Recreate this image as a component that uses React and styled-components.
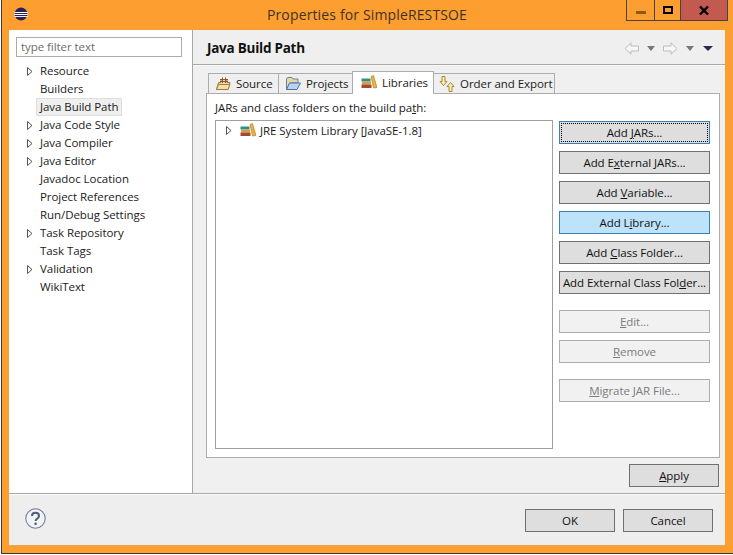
import styled, { createGlobalStyle } from 'styled-components';

const Global = createGlobalStyle`
  html, body { margin: 0; padding: 0; background: #fff; }
  * { box-sizing: border-box; }
`;

const treeItems = [
  { label: 'Resource', arrow: true },
  { label: 'Builders' },
  { label: 'Java Build Path', selected: true },
  { label: 'Java Code Style', arrow: true },
  { label: 'Java Compiler', arrow: true },
  { label: 'Java Editor', arrow: true },
  { label: 'Javadoc Location' },
  { label: 'Project References' },
  { label: 'Run/Debug Settings' },
  { label: 'Task Repository', arrow: true },
  { label: 'Task Tags' },
  { label: 'Validation', arrow: true },
  { label: 'WikiText' },
];

const Arrow = () => (
  <ArrowSvg width="6" height="9" viewBox="0 0 6 9">
    <path d="M0.5 0.5 L5 4.5 L0.5 8.5 Z" fill="#fff" stroke="#555" />
  </ArrowSvg>
);

const EclipseLogo = () => (
  <svg width="14" height="14" viewBox="0 0 14 14">
    <circle cx="7" cy="7" r="6.5" fill="#2c2255" />
    <rect x="0" y="5" width="14" height="1" fill="#fff" />
    <rect x="0" y="7" width="14" height="1" fill="#fff" />
    <rect x="0" y="9" width="14" height="1" fill="#e8e8f0" />
  </svg>
);

const SourceIcon = () => (
  <svg width="16" height="14" viewBox="0 0 16 14">
    <path d="M1.5 12.5 L3.5 5.5 L6 5.5 L6 2.5 L12 2.5 L12 5.5 L15 5.5 L13 12.5 Z" fill="#f0d8a0" stroke="#a07c3c" />
    <path d="M7.5 0.5 V6 M10.5 0.5 V6 M5 2.5 H13 M5 4.5 H13" stroke="#8a5a30" fill="none" />
    <path d="M1.5 12.5 L3.5 7.5 L15 7.5 L13 12.5 Z" fill="#f5dfa8" stroke="#a07c3c" />
  </svg>
);

const FolderIcon = () => (
  <svg width="16" height="14" viewBox="0 0 16 14">
    <path d="M1.5 12.5 V1.5 L3 0.5 H7 L8 2 H13 V6 H5 Z" fill="#e6d9a8" stroke="#6d7fa0" />
    <path d="M1.5 12.5 L4.5 6 H15.5 L12 12.5 Z" fill="#b9d2f0" stroke="#4f71a5" />
  </svg>
);

const LibraryIcon = () => (
  <svg width="16" height="14" viewBox="0 0 16 14">
    <rect x="0.5" y="3.5" width="9" height="3" fill="#2f8f88" />
    <rect x="1" y="6.5" width="9" height="3" fill="#d0a050" />
    <rect x="0.5" y="9.5" width="10" height="3.5" fill="#a8482f" />
    <path d="M10 1.5 L12.5 0.5 L16 12.5 L12.5 13 Z" fill="#ecb335" stroke="#a07820" strokeWidth="0.6" />
  </svg>
);

const OrderIcon = () => (
  <svg width="16" height="16" viewBox="0 0 16 16">
    <path d="M3 0.5 H6 V5.5 H8 L4.5 9.5 L1 5.5 H3 Z" fill="#fbeeb8" stroke="#a98a30" />
    <path d="M10 15.5 H13 V10.5 H15 L11.5 6.5 L8 10.5 H10 Z" fill="#fbeeb8" stroke="#a98a30" />
  </svg>
);

const NavArrow = ({ flip }) => (
  <svg width="15" height="13" viewBox="0 0 15 13">
    <path
      d={flip ? 'M0.5 4 H8 V0.8 L14 6.5 L8 12.2 V9 H0.5 Z' : 'M14.5 4 H7 V0.8 L1 6.5 L7 12.2 V9 H14.5 Z'}
      fill="#f6f6f6"
      stroke="#bcbcbc"
    />
  </svg>
);

const HelpIcon = () => (
  <HelpSvg width="21" height="21" viewBox="0 0 21 21">
    <circle cx="10.5" cy="10.5" r="9.7" fill="#f2f3f5" stroke="#6f8299" strokeWidth="1.1" />
    <path d="M7 8 C7 3.8 14 3.8 14 8 C14 10.5 10.6 10.4 10.6 13" fill="none" stroke="#4a5f78" strokeWidth="2" />
    <circle cx="10.6" cy="15.8" r="1.3" fill="#4a5f78" />
  </HelpSvg>
);

const Btn = ({ label, u, ...rest }) => {
  const i = u == null ? -1 : u;
  return (
    <Button {...rest}>
      {i < 0 ? label : (
        <>
          {label.slice(0, i)}
          <U>{label[i]}</U>
          {label.slice(i + 1)}
        </>
      )}
    </Button>
  );
};

export default function App() {
  return (
    <>
      <Global />
      <Frame>
        <TitleBar>
          <LogoSlot><EclipseLogo /></LogoSlot>
          <Title>Properties for SimpleRESTSOE</Title>
          <WindowControls>
            <MinBtn><MinBar /></MinBtn>
            <MaxBtn><MaxBox /></MaxBtn>
            <CloseBtn>
              <svg width="10" height="9" viewBox="0 0 10 9">
                <path d="M1 0.5 L9 8.5 M9 0.5 L1 8.5" stroke="#000" strokeWidth="2.4" />
              </svg>
            </CloseBtn>
          </WindowControls>
        </TitleBar>
        <Client>
          <Main>
            <Sidebar>
              <Filter>type filter text</Filter>
              <Tree>
                {treeItems.map(item => (
                  <TreeRow key={item.label}>
                    <ArrowSlot>{item.arrow && <Arrow />}</ArrowSlot>
                    <TreeLabel $selected={item.selected}>{item.label}</TreeLabel>
                  </TreeRow>
                ))}
              </Tree>
            </Sidebar>
            <Content>
              <Header>
                <HeaderTitle>Java Build Path</HeaderTitle>
                <NavGroup>
                  <NavArrow />
                  <Caret />
                  <NavArrow flip />
                  <Caret />
                  <Caret $dark />
                </NavGroup>
              </Header>
              <Body>
                <Tabs>
                  <Tab $w={71} $pad={6}><SourceIcon />Source</Tab>
                  <Tab $w={75} $pad={6}><FolderIcon />Projects</Tab>
                  <Tab $w={82} $pad={8} $active><LibraryIcon />Libraries</Tab>
                  <Tab $w={122} $pad={5}><OrderIcon />Order and Export</Tab>
                </Tabs>
                <Panel>
                  <PanelLabel>JARs and class folders on the build pa<U>t</U>h:</PanelLabel>
                  <PanelBody>
                    <List>
                      <ListRow>
                        <Arrow />
                        <LibraryIcon />
                        <ListText>JRE System Library [JavaSE-1.8]</ListText>
                      </ListRow>
                    </List>
                    <ButtonColumn>
                      <Btn label="Add JARs..." u={4} $focus />
                      <Btn label="Add External JARs..." u={5} />
                      <Btn label="Add Variable..." u={4} />
                      <Btn label="Add Library..." u={5} $hot />
                      <Btn label="Add Class Folder..." u={4} />
                      <Btn label="Add External Class Folder..." u={22} />
                      <Spacer />
                      <Btn label="Edit..." u={0} disabled />
                      <Btn label="Remove" u={0} disabled />
                      <Spacer />
                      <Btn label="Migrate JAR File..." u={0} disabled />
                    </ButtonColumn>
                  </PanelBody>
                </Panel>
                <ApplyRow>
                  <Btn label="Apply" u={0} $w={90} />
                </ApplyRow>
              </Body>
            </Content>
          </Main>
          <Footer>
            <HelpIcon />
            <FooterButtons>
              <Btn label="OK" $w={90} />
              <Btn label="Cancel" $w={90} />
            </FooterButtons>
          </Footer>
        </Client>
      </Frame>
    </>
  );
}

const Frame = styled.div`
  width: 732px;
  height: 554px;
  margin-left: 1px;
  background: #fd9f30;
  border-left: 1px solid #3a3a3a;
  border-bottom: 1px solid #3a3a3a;
  display: flex;
  flex-direction: column;
  padding: 0 8px 7px 7px;
  font-family: 'Open Sans', 'Noto Sans', sans-serif;
  font-size: 11.5px;
  letter-spacing: -0.06px;
  color: #1a1a1a;
  overflow: hidden;
`;

const TitleBar = styled.div`
  height: 30px;
  flex: none;
  display: flex;
  align-items: flex-start;
  position: relative;
`;

const LogoSlot = styled.div`
  padding: 7px 0 0 5px;
  display: flex;
`;

const Title = styled.div`
  position: absolute;
  left: 0;
  right: 0;
  top: 5px;
  text-align: center;
  font-size: 14px;
  letter-spacing: 0.14px;
  line-height: 20px;
  color: #3d3226;
`;

const WindowControls = styled.div`
  margin-left: auto;
  margin-right: -3px;
  display: flex;
  height: 21px;
  border: 1px solid #444;
  border-top: 0;
  position: relative;
`;

const Control = styled.div`
  display: flex;
  align-items: center;
  justify-content: center;
  height: 100%;
`;

const MinBtn = styled(Control)`
  width: 28px;
  border-right: 1px solid #444;
`;

const MaxBtn = styled(Control)`
  width: 26px;
  border-right: 1px solid #444;
`;

const CloseBtn = styled(Control)`
  width: 46px;
  background: #c35a50;
`;

const MinBar = styled.div`
  width: 10px;
  height: 3px;
  background: #8a5a1c;
  margin-top: 5px;
`;

const MaxBox = styled.div`
  width: 10px;
  height: 8px;
  border: 2px solid #000;
`;

const Client = styled.div`
  flex: 1;
  display: flex;
  flex-direction: column;
  background: #efefef;
  min-height: 0;
  border-bottom: 1px solid #e3a65c;
`;

const Main = styled.div`
  flex: 1;
  display: flex;
  min-height: 0;
`;

const Sidebar = styled.div`
  width: 184px;
  flex: none;
  background: #fff;
  border-right: 1px solid #a8a8a8;
  padding: 7px 10px 0 7px;
`;

const Filter = styled.div`
  height: 20px;
  border: 1px solid #ababab;
  line-height: 18px;
  padding-left: 4px;
  color: #6d6d6d;
  background: #fff;
`;

const Tree = styled.div`
  padding-top: 5px;
`;

const TreeRow = styled.div`
  height: 18px;
  display: flex;
  align-items: center;
`;

const ArrowSlot = styled.div`
  width: 24px;
  padding-left: 11px;
  display: flex;
  align-items: center;
  flex: none;
`;

const ArrowSvg = styled.svg`
  flex: none;
`;

const TreeLabel = styled.div`
  margin-left: ${p => (p.$selected ? '-4px' : '0')};
  padding: 0 ${p => (p.$selected ? '3px' : '0')};
  height: ${p => (p.$selected ? '18px' : 'auto')};
  line-height: 16px;
  background: ${p => (p.$selected ? '#efefef' : 'transparent')};
  border: ${p => (p.$selected ? '1px solid #dedede' : '0')};
  white-space: nowrap;
`;

const Content = styled.div`
  flex: 1;
  display: flex;
  flex-direction: column;
  min-width: 0;
`;

const Header = styled.div`
  height: 35px;
  flex: none;
  display: flex;
  align-items: center;
  padding: 2px 0 0 14px;
  border-bottom: 1px solid #a9a9a9;
  background: #efefef;
`;

const HeaderTitle = styled.div`
  font-size: 13.5px;
  letter-spacing: -0.25px;
  font-weight: 700;
  color: #111;
`;

const NavGroup = styled.div`
  margin-left: auto;
  display: flex;
  align-items: center;
  margin-right: 12px;
  gap: 8px;
`;

const Caret = styled.div`
  width: 0;
  height: 0;
  border-left: ${p => (p.$dark ? '5px' : '4px')} solid transparent;
  border-right: ${p => (p.$dark ? '5px' : '4px')} solid transparent;
  border-top: 5px solid ${p => (p.$dark ? '#2f2850' : '#777')};
  margin-left: ${p => (p.$dark ? '1px' : '0')};
`;

const Body = styled.div`
  flex: 1;
  padding: 5px 5px 0 13px;
  display: flex;
  flex-direction: column;
  background: #f0f0f0;
  border-top: 1px solid #f9f9f9;
  min-height: 0;
`;

const Tabs = styled.div`
  display: flex;
  height: 22px;
  padding-left: 3px;
  flex: none;
  position: relative;
  z-index: 1;
`;

const Tab = styled.div`
  width: ${p => p.$w}px;
  height: ${p => (p.$active ? '23px' : '21px')};
  margin-top: ${p => (p.$active ? '0' : '2px')};
  margin-left: -1px;
  background: ${p => (p.$active ? '#fff' : '#efefef')};
  border: 1px solid #acacac;
  border-bottom: ${p => (p.$active ? '0' : '1px solid #acacac')};
  position: relative;
  z-index: ${p => (p.$active ? 1 : 0)};
  display: flex;
  align-items: center;
  gap: 5px;
  padding: 0 0 ${p => (p.$active ? '2px' : '0')} ${p => p.$pad}px;
  white-space: nowrap;
`;

const Panel = styled.div`
  width: 514px;
  height: 365px;
  flex: none;
  border: 1px solid #acacac;
  background: #fff;
  padding: 6px 8px 0 8px;
`;

const PanelLabel = styled.div`
  height: 16px;
  line-height: 16px;
`;

const PanelBody = styled.div`
  display: flex;
  margin-top: 4px;
  gap: 6px;
`;

const List = styled.div`
  width: 338px;
  height: 329px;
  border: 1px solid #a0a0a0;
  flex: none;
  padding: 0 0 0 10px;
`;

const ListRow = styled.div`
  display: flex;
  align-items: center;
  height: 18px;
  gap: 8px;
`;

const ListText = styled.span`
  margin-left: -4px;
`;

const ButtonColumn = styled.div`
  display: flex;
  flex-direction: column;
  gap: 7px;
  width: 151px;
  padding-top: 1px;
`;

const Spacer = styled.div`
  height: 2px;
`;

const Button = styled.button`
  width: ${p => (p.$w ? `${p.$w}px` : '100%')};
  height: 23px;
  flex: none;
  padding: 0;
  font: inherit;
  letter-spacing: inherit;
  color: ${p => (p.disabled ? '#7c7c7c' : '#111')};
  background: ${p => (p.$hot ? '#bde3fb' : p.disabled ? '#f1f1f1' : '#dedede')};
  border: 1px solid ${p => (p.$hot || p.$focus ? '#3c7fb1' : p.disabled ? '#adadad' : '#707070')};
  outline: ${p => (p.$focus ? '1px dotted #000' : 'none')};
  outline-offset: -3px;
  white-space: nowrap;
`;

const U = styled.span`
  text-decoration: underline;
`;

const ApplyRow = styled.div`
  display: flex;
  justify-content: flex-end;
  padding: 6px 1px 0 0;
`;

const Footer = styled.div`
  height: 52px;
  flex: none;
  border-top: 1px solid #a9a9a9;
  box-shadow: inset 0 1px 0 #fafafa;
  display: flex;
  align-items: center;
  padding: 2px 12px 0 16px;
  background: #eeeeee;
`;

const HelpSvg = styled.svg`
  margin-top: -4px;
`;

const FooterButtons = styled.div`
  margin-left: auto;
  display: flex;
  gap: 8px;
`;
